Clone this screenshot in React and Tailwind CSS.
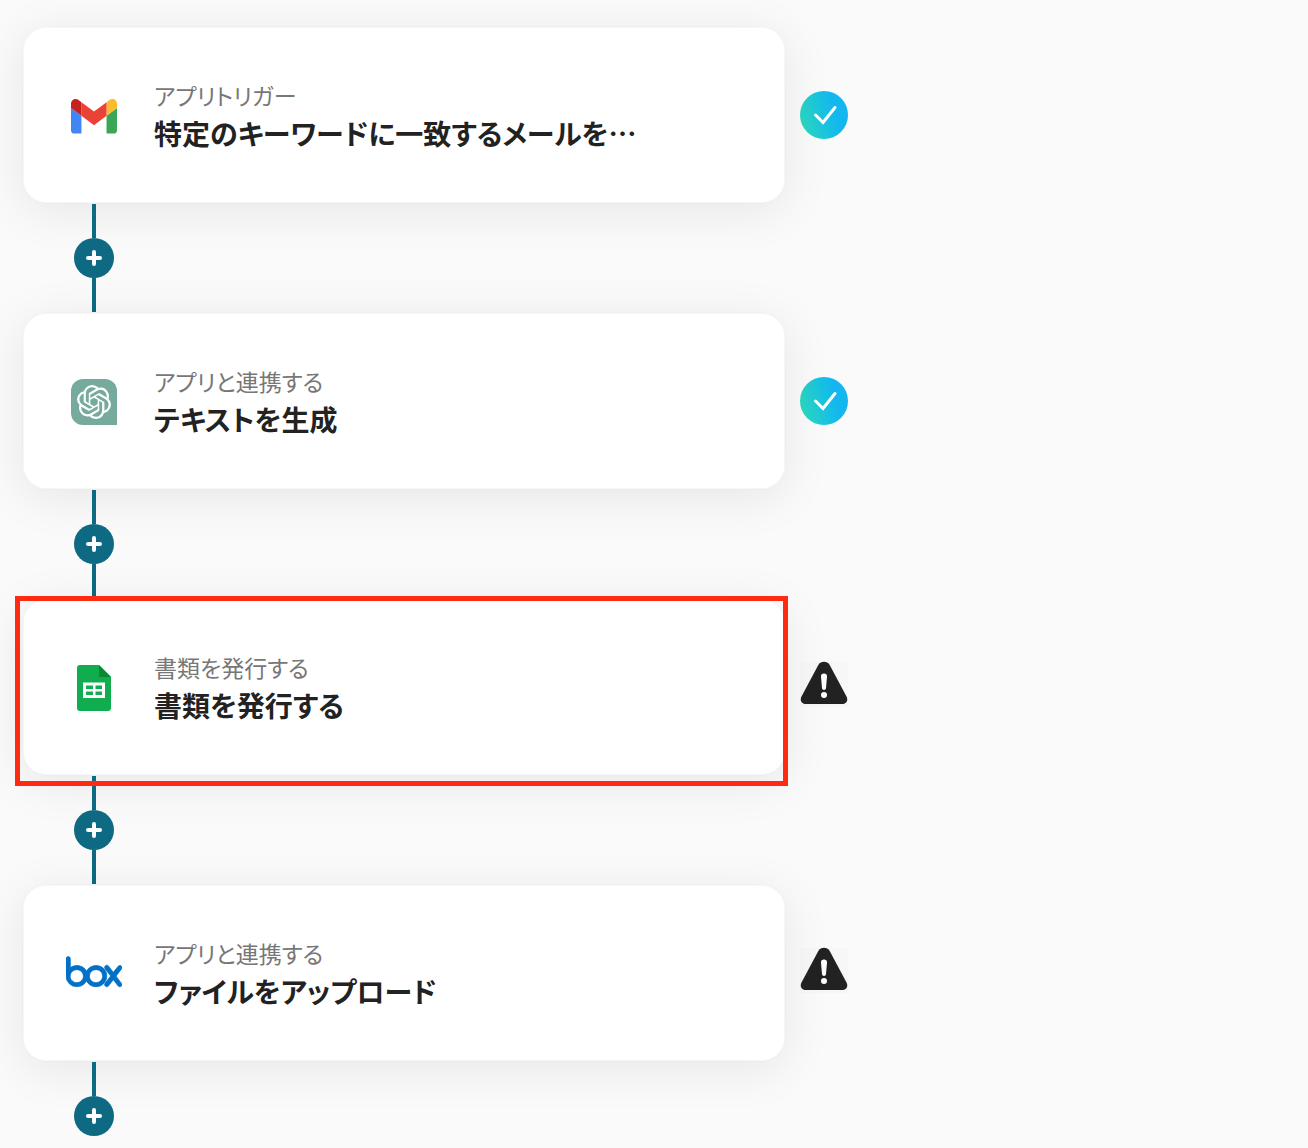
import React from "react";
import { SiBox, SiOpenai } from "react-icons/si";

function GmailIcon() {
  return (
    <svg viewBox="52 41 88 68" className="w-[46px]" aria-hidden="true">
      <path fill="#4285f4" d="M58 109h14V75L52 60v43c0 3.32 2.69 6 6 6" />
      <path fill="#3aa757" d="M120 109h14c3.32 0 6-2.69 6-6V60l-20 15" />
      <path fill="#fbbc2c" d="M120 49v26l20-15v-8c0-7.42-8.47-11.65-14.4-7.2" />
      <path fill="#ea4335" d="M72 75V49l24 18 24-18v26L96 93" />
      <path
        fill="#c5221f"
        d="M52 52v8l20 15V49l-5.6-4.2c-5.94-4.45-14.4-.22-14.4 7.2"
      />
    </svg>
  );
}

function ChatGptIcon() {
  return (
    <div className="flex size-[46px] items-center justify-center rounded-xl rounded-br-none bg-[#75aa9c]">
      <SiOpenai className="size-[34px] text-white" aria-hidden="true" />
    </div>
  );
}

function SheetsIcon() {
  return (
    <svg viewBox="0 0 34 46" className="w-[34px]" aria-hidden="true">
      <path
        fill="#0fad4e"
        d="M3 0h19l12 12v31a3 3 0 0 1-3 3H3a3 3 0 0 1-3-3V3a3 3 0 0 1 3-3z"
      />
      <path fill="#0b8635" d="M22 0l12 12H22z" />
      <path
        fill="#fff"
        fillRule="evenodd"
        d="M6 17.5h22V33H6zM9 20.5v3.5h7v-3.5zM18.5 20.5v3.5h6.5v-3.5zM9 26.5V30h7v-3.5zM18.5 26.5V30h6.5v-3.5z"
      />
    </svg>
  );
}

function BoxIcon() {
  return (
    <SiBox
      className="size-14 text-[#0071c6]"
      viewBox="0 1 24 24"
      stroke="#0071c6"
      strokeWidth="0.3"
      aria-hidden="true"
    />
  );
}

function DoneBadge() {
  return (
    <div
      role="img"
      aria-label="設定済み"
      className="flex size-12 items-center justify-center rounded-full bg-linear-75 from-[#32dcb8] from-0% to-[#13b7ee] to-70%"
    >
      <svg viewBox="0 0 48 48" className="size-12">
        <path
          d="M15.5 24l7.5 7.5L35 16.5"
          fill="none"
          stroke="#fff"
          strokeWidth="3"
          strokeLinecap="round"
          strokeLinejoin="miter"
        />
      </svg>
    </div>
  );
}

function WarningBadge() {
  return (
    <svg viewBox="0 0 48 52" role="img" aria-label="未設定" className="w-12">
      <rect y="1" width="48" height="45" fill="#f7f7f7" />
      <path
        fill="#222"
        d="M18.3 4C20.8 -.3 27.2 -.3 29.7 4L46.5 35.5C48.5 39.5 46.3 43 42 43H6C1.7 43 -.5 39.5 1.5 35.5z"
      />
      <path
        fill="#fff"
        d="M24 12.5c2 0 3.2 1.2 3 3.2l-1 11.3c-.1 1.2-.9 2-2 2s-1.9-.8-2-2l-1-11.3c-.2-2 1-3.2 3-3.2z"
      />
      <circle cx="24" cy="34" r="3" fill="#fff" />
    </svg>
  );
}

const steps = [
  {
    id: 1,
    label: "アプリトリガー",
    title: "特定のキーワードに一致するメールを…",
    icon: GmailIcon,
    done: true,
  },
  {
    id: 2,
    label: "アプリと連携する",
    title: "テキストを生成",
    icon: ChatGptIcon,
    done: true,
  },
  {
    id: 3,
    label: "書類を発行する",
    title: "書類を発行する",
    icon: SheetsIcon,
    done: false,
    highlighted: true,
  },
  {
    id: 4,
    label: "アプリと連携する",
    title: "ファイルをアップロード",
    icon: BoxIcon,
    done: false,
  },
];

function StepCard({ step }) {
  const Icon = step.icon;

  return (
    <div className="flex items-center gap-3.5">
      <div className="relative min-w-0 max-w-[764px] flex-1">
        <div className="flex h-[178px] items-center gap-8 rounded-3xl border-2 border-black/1 bg-white bg-clip-padding px-[42px] pt-0.5 shadow-[0_8px_48px_rgba(0,0,0,0.08)]">
          <div className="flex w-14 shrink-0 items-center justify-center">
            <Icon />
          </div>
          <div className="min-w-0 pt-0.5">
            <p className="text-[23px] leading-8 text-[#777]">{step.label}</p>
            <h2 className="truncate text-[28px] leading-[44px] font-bold text-[#222]">
              {step.title}
            </h2>
          </div>
        </div>

        {/* Red frame around the step being explained */}
        {step.highlighted && (
          <div className="pointer-events-none absolute -top-0.5 -right-0.5 -bottom-2.5 -left-[7px] z-10 border-5 border-[#ff2a12]" />
        )}
      </div>
      {step.done ? <DoneBadge /> : <WarningBadge />}
    </div>
  );
}

function Connector({ last }) {
  return (
    <div className="relative ml-[52px] flex w-10 flex-col items-center">
      <div className="h-[34px] w-1 bg-[#0d6a82]" />
      <button
        type="button"
        aria-label="ステップを追加"
        className="flex size-10 items-center justify-center rounded-full bg-[#0d6a82]"
      >
        <svg viewBox="0 0 16 16" className="size-4">
          <path
            d="M8 2v12M2 8h12"
            stroke="#fff"
            strokeWidth="4"
            strokeLinecap="round"
          />
        </svg>
      </button>
      {!last && <div className="h-[34px] w-1 bg-[#0d6a82]" />}
    </div>
  );
}

export default function App() {
  return (
    <main className="min-h-screen bg-[#fafafa] px-[22px] pt-[26px] pb-3 font-['Noto_Sans_CJK_JP',sans-serif] [font-feature-settings:'palt']">
      <ol>
        {steps.map((step, i) => (
          <li key={step.id}>
            <StepCard step={step} />
            <Connector last={i === steps.length - 1} />
          </li>
        ))}
      </ol>
    </main>
  );
}
